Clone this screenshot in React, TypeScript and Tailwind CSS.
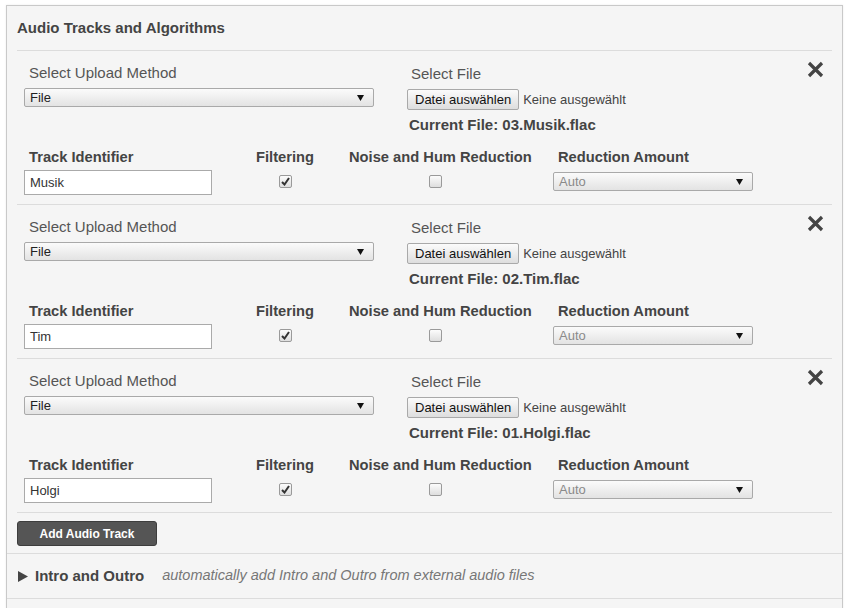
import React from "react";

const font = { fontFamily: '"Liberation Sans", Arial, Helvetica, sans-serif' };

function SelectBox({ value, w, disabled }: { value: string; w: string; disabled?: boolean }) {
  return (
    <div
      className={`${w} h-[19px] flex items-center justify-between pl-[5px] pr-[9px] border border-[#a9a9a9] rounded-[2px] bg-gradient-to-b from-[#fbfbfb] to-[#e3e3e3] text-[13px] leading-none ${
        disabled ? "text-[#8a8a8a]" : "text-[#222]"
      }`}
    >
      <span>{value}</span>
      <svg width="7" height="7" viewBox="0 0 7 7">
        <path d="M0 1 L7 1 L3.5 7 Z" fill="#111" />
      </svg>
    </div>
  );
}

function Checkbox({ checked }: { checked?: boolean }) {
  return (
    <div className="w-[13px] h-[13px] rounded-[2px] border border-[#9a9a9a] bg-gradient-to-b from-[#fcfcfc] to-[#dedede] flex items-center justify-center">
      {checked && (
        <svg width="9" height="9" viewBox="0 0 9 9">
          <path d="M1 5 L3.5 7.5 L8 1" fill="none" stroke="#333" strokeWidth="2" />
        </svg>
      )}
    </div>
  );
}

function Track({ name, file }: { name: string; file: string }) {
  return (
    <div className="relative h-[154px] border-b border-[#dcdcdc]">
      <svg
        className="absolute right-[8px] top-[10px]"
        width="17"
        height="17"
        viewBox="0 0 17 17"
      >
        <path d="M2 2 L15 15 M15 2 L2 15" stroke="#444" strokeWidth="3.2" strokeLinecap="butt" />
      </svg>
      <div className="flex h-[97px] pt-[13px]">
        <div className="w-[390px] pl-[7px]">
          <div className="pl-[5px] text-[15px] leading-[18px] text-[#555]">Select Upload Method</div>
          <div className="mt-[6px]">
            <SelectBox value="File" w="w-[350px]" />
          </div>
        </div>
        <div className="pt-[1px]">
          <div className="pl-[4px] text-[15px] leading-[18px] text-[#555]">Select File</div>
          <div className="mt-[6px] flex items-center">
            <div className="h-[21px] px-[7px] flex items-center border border-[#a9a9a9] rounded-[2px] bg-gradient-to-b from-[#fbfbfb] to-[#dedede] text-[13px] text-[#111]">
              Datei auswählen
            </div>
            <span className="ml-[4px] text-[13px] text-[#444]">Keine ausgewählt</span>
          </div>
          <div className="mt-[6px] pl-[2px] text-[15px] leading-[17px] font-bold text-[#444]">
            Current File: {file}
          </div>
        </div>
      </div>
      <div className="flex pl-[7px]">
        <div className="w-[188px]">
          <div className="pl-[5px] text-[14.7px] leading-[18px] font-bold text-[#444]">Track Identifier</div>
          <div className="mt-[4px] h-[25px] w-[188px] border border-[#aaa] bg-white flex items-center pl-[5px] text-[13px] text-[#333]">
            {name}
          </div>
        </div>
        <div className="ml-[43px] w-[60px] flex flex-col items-center">
          <div className="text-[14.7px] leading-[18px] font-bold text-[#444] whitespace-nowrap">Filtering</div>
          <div className="mt-[9px]">
            <Checkbox checked />
          </div>
        </div>
        <div className="ml-[34px] w-[184px] flex flex-col">
          <div className="text-[14.7px] leading-[18px] font-bold text-[#444] whitespace-nowrap">Noise and Hum Reduction</div>
          <div className="mt-[9px] pl-[80px]">
            <Checkbox />
          </div>
        </div>
        <div className="ml-[20px]">
          <div className="pl-[5px] text-[14.7px] leading-[18px] font-bold text-[#444] whitespace-nowrap">Reduction Amount</div>
          <div className="mt-[6px]">
            <SelectBox value="Auto" w="w-[200px]" disabled />
          </div>
        </div>
      </div>
    </div>
  );
}

export default function App() {
  return (
    <div className="w-[850px] h-[608px] overflow-hidden bg-white" style={font}>
      <div className="ml-[6px] mt-[5px] w-[837px] h-[700px] border border-[#c9c9c9] bg-[#f5f5f5] shadow-[0_0_2px_rgba(0,0,0,0.08)]">
        <div className="px-[10px]">
          <div className="h-[45px] flex items-center border-b border-[#dcdcdc] text-[15px] font-bold text-[#444]">
            Audio Tracks and Algorithms
          </div>
          <Track name="Musik" file="03.Musik.flac" />
          <Track name="Tim" file="02.Tim.flac" />
          <Track name="Holgi" file="01.Holgi.flac" />
          <div className="pt-[8px] pb-[7px]">
            <div className="w-[140px] h-[25px] rounded-[3px] bg-[#555] border border-[#3d3d3d] flex items-center justify-center text-[12px] font-bold text-white">
              Add Audio Track
            </div>
          </div>
        </div>
        <div className="h-[46px] border-t border-b border-[#dcdcdc] flex items-center pl-[11px]">
          <svg width="10" height="11" viewBox="0 0 10 11">
            <path d="M0 0 L10 5.5 L0 11 Z" fill="#444" />
          </svg>
          <span className="ml-[7px] text-[15px] font-bold text-[#444]">Intro and Outro</span>
          <span className="ml-[18px] text-[14.5px] italic text-[#777]">
            automatically add Intro and Outro from external audio files
          </span>
        </div>
      </div>
    </div>
  );
}
